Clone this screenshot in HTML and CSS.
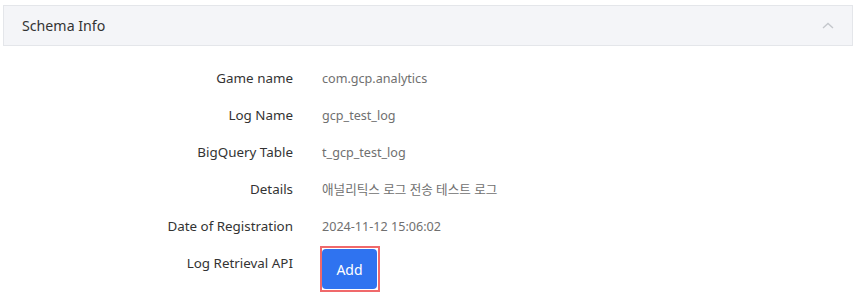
FILE: index.html
```html
<!DOCTYPE html>
<html lang="en">
<head>
    <meta charset="UTF-8">
    <meta name="viewport" content="width=device-width, initial-scale=1.0">
    <title>Schema Info</title>
    <link rel="stylesheet" href="styles.css">
</head>
<body>

<div class="panel">
    <div class="panel-header">
        <span class="panel-title">Schema Info</span>
        <svg class="chevron" width="12" height="7" viewBox="0 0 12 7">
            <path d="M1 6 L6 1.5 L11 6" fill="none" stroke="#c4c7cc" stroke-width="1.4"/>
        </svg>
    </div>

    <div class="info">
        <div class="label">Game name</div>
        <div class="value">com.gcp.analytics</div>

        <div class="label">Log Name</div>
        <div class="value">gcp_test_log</div>

        <div class="label">BigQuery Table</div>
        <div class="value">t_gcp_test_log</div>

        <div class="label">Details</div>
        <div class="value">애널리틱스 로그 전송 테스트 로그</div>

        <div class="label">Date of Registration</div>
        <div class="value">2024-11-12 15:06:02</div>

        <div class="label">Log Retrieval API</div>
        <div class="value last">
            <span class="highlight"><button class="btn-add">Add</button></span>
        </div>
    </div>
</div>

</body>
</html>
```

FILE: styles.css
```css
body { margin: 0; padding: 0; font-family: "Noto Sans", "Noto Sans CJK KR", sans-serif; background: #fff; }
.panel { padding: 5px 8px 0 3px; }
.panel-header { display: flex; align-items: center; justify-content: space-between; height: 39px; padding: 0 18px 0 18px; background: #f4f5f8; border: 1px solid #e4e6ea; }
.panel-title { font-size: 14.2px; color: #333; }
.info { display: grid; grid-template-columns: 290px 1fr; column-gap: 29px; padding-top: 14px; }
.label, .value { height: 37px; line-height: 37px; }
.label { text-align: right; font-size: 13.4px; color: #333; }
.value { font-size: 12.6px; color: #707070; }
.value.last { height: 51px; }
.highlight { display: inline-block; margin-top: 1px; margin-left: -2px; border: 2px solid #f0696b; padding: 1px 1px 1px 0; line-height: 0; }
.btn-add { width: 55px; height: 40px; background: #2f73f0; color: #fff; border: none; border-radius: 4px; font-family: inherit; font-size: 14px; cursor: pointer; }
```
